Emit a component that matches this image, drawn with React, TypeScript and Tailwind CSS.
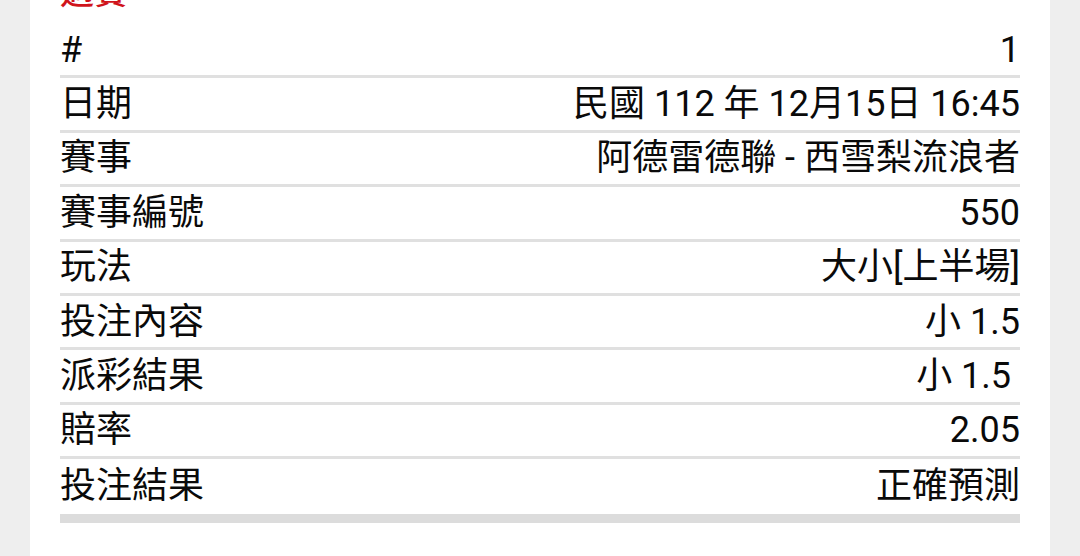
import React from "react";

const rows: [string, string][] = [
  ["#", "1"],
  ["日期", "民國 112 年 12月15日 16:45"],
  ["賽事", "阿德雷德聯 - 西雪梨流浪者"],
  ["賽事編號", "550"],
  ["玩法", "大小[上半場]"],
  ["投注內容", "小 1.5"],
  ["派彩結果", "小 1.5 "],
  ["賠率", "2.05"],
  ["投注結果", "正確預測"],
];

export default function App() {
  return (
    <div
      className="w-[1080px] h-[556px] overflow-hidden bg-[#eeeeee] px-[30px]"
      style={{ fontFamily: "Roboto, 'Noto Sans CJK TC', sans-serif" }}
    >
      <div className="h-full bg-white px-[30px]">
        {/* section title, scrolled mostly out of view */}
        <div className="h-[24px] overflow-hidden flex items-end">
          <h2 className="text-[34px] leading-none font-medium text-[#d0141b] mb-[15px]">過賽</h2>
        </div>

        <div className="border-b-[9px] border-[#dcdcdc]">
          {rows.map(([label, value], i) => (
            <div
              key={label}
              className={`flex items-center justify-between h-[54.4px] text-[36px] text-[#0a0a0a] ${
                i < rows.length - 1 ? "border-b-[3px] border-[#e0e0e0]" : ""
              }`}
            >
              <span>{label}</span>
              <span className="whitespace-pre">{value}</span>
            </div>
          ))}
        </div>
      </div>
    </div>
  );
}
